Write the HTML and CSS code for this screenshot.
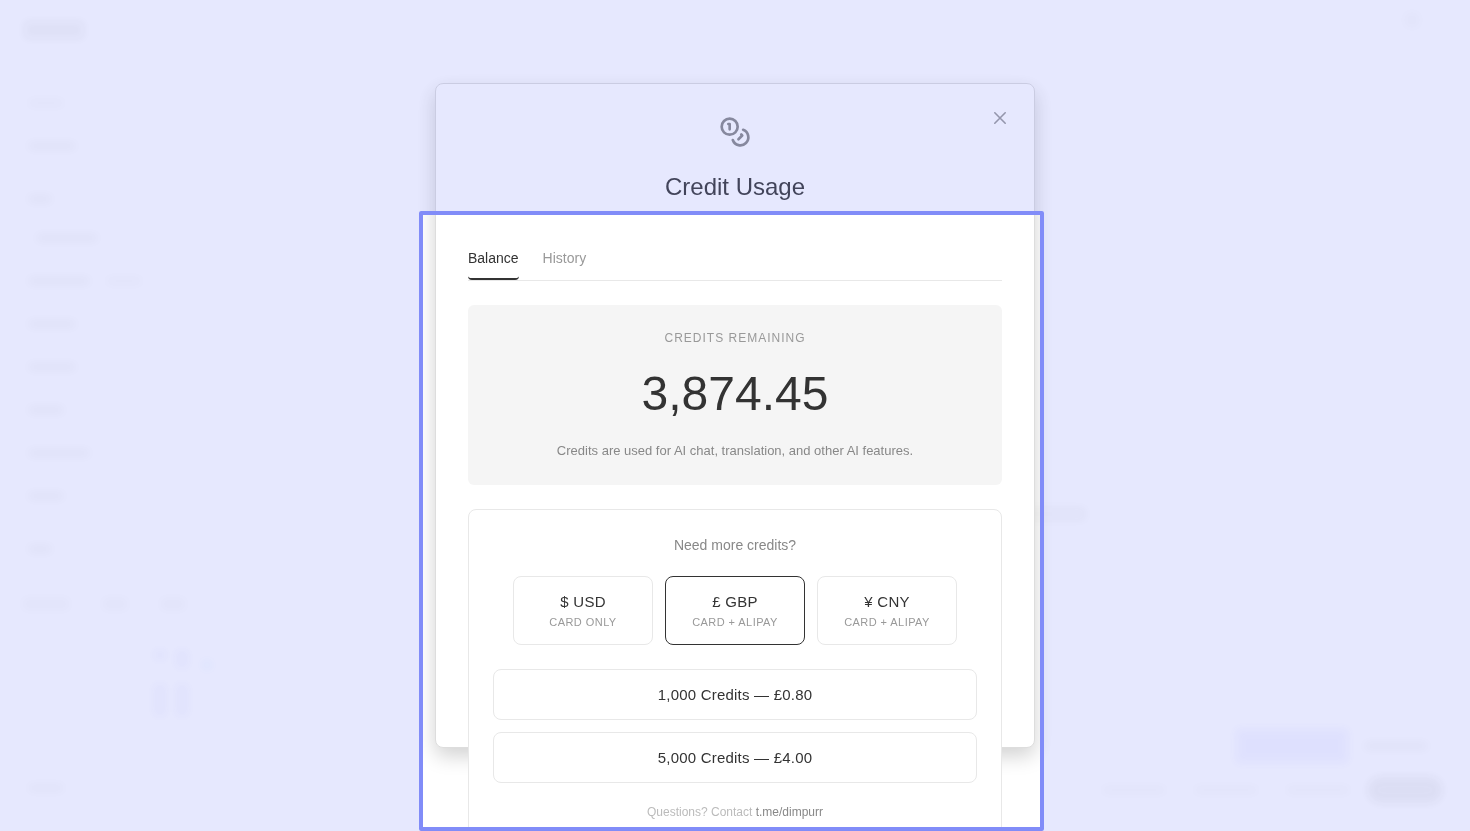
FILE: index.html
```html
<!DOCTYPE html>
<html lang="en">
<head>
<meta charset="utf-8">
<meta name="viewport" content="width=device-width, initial-scale=1">
<title>Credit Usage</title>
<link rel="stylesheet" href="styles.css">
</head>
<body>
<div class="backdrop" aria-hidden="true">
  <div class="side">
    <i class="bar brand"></i>
    <i class="bar short pale"></i>
    <i class="bar mid"></i>
    <i class="bar tiny group"></i>
    <i class="bar long nested"></i>
    <div class="pair"><i class="bar long"></i><i class="bar short pale"></i></div>
    <i class="bar mid"></i>
    <i class="bar mid"></i>
    <i class="bar short"></i>
    <i class="bar long"></i>
    <i class="bar short"></i>
    <i class="bar tiny group"></i>
    <div class="stats"><i class="bar"></i><i class="bar"></i><i class="bar"></i></div>
    <div class="marks"><i class="bar dot"></i><i class="bar"></i><i class="bar sky"></i><i class="bar tall"></i><i class="bar tall"></i></div>
    <i class="bar short foot"></i>
  </div>
  <div class="main">
    <i class="bar avatar"></i>
    <i class="bar headline"></i>
    <div class="row first"><i class="bar accent"></i><i class="bar label"></i></div>
    <div class="row"><i class="bar label pale"></i><i class="bar label pale"></i><i class="bar label pale"></i><i class="bar pill"></i></div>
  </div>
</div>

<div class="overlay">
  <section class="modal" role="dialog" aria-labelledby="title">
    <button class="close" type="button" aria-label="Close">
      <svg width="20" height="20" viewBox="0 0 20 20" fill="none" stroke="currentColor" stroke-width="1.6" stroke-linecap="round"><path d="M4.8 4.8l10.4 10.4M15.2 4.8L4.8 15.2"/></svg>
    </button>
    <header class="head">
      <svg class="coins" width="32" height="32" viewBox="0 0 24 24" fill="none" stroke="currentColor" stroke-width="2" stroke-linecap="round" stroke-linejoin="round"><circle cx="8" cy="8" r="6"/><path d="M18.09 10.37A6 6 0 1 1 10.34 18"/><path d="M7 6h1v4"/><path d="m16.71 13.88.7.71-2.82 2.82"/></svg>
      <h1 class="title" id="title">Credit Usage</h1>
    </header>
    <nav class="tabs" role="tablist">
      <button class="tab active" type="button" role="tab" aria-selected="true">Balance</button>
      <button class="tab" type="button" role="tab" aria-selected="false">History</button>
    </nav>
    <div class="balance">
      <p class="caption">CREDITS REMAINING</p>
      <p class="amount">3,874.45</p>
      <p class="note">Credits are used for AI chat, translation, and other AI features.</p>
    </div>
    <div class="purchase">
      <p class="ask">Need more credits?</p>
      <div class="currencies">
        <button class="currency" type="button"><span class="code">$ USD</span><span class="method">CARD ONLY</span></button>
        <button class="currency selected" type="button"><span class="code">£ GBP</span><span class="method">CARD + ALIPAY</span></button>
        <button class="currency" type="button"><span class="code">¥ CNY</span><span class="method">CARD + ALIPAY</span></button>
      </div>
      <div class="packs">
        <button class="pack" type="button">1,000 Credits — £0.80</button>
        <button class="pack" type="button">5,000 Credits — £4.00</button>
      </div>
      <p class="contact">Questions? Contact <a href="#">t.me/dimpurr</a></p>
    </div>
  </section>
</div>
<div class="spotlight" aria-hidden="true"></div>
</body>
</html>
```

FILE: styles.css
```css
* { box-sizing: border-box; }
body {
  margin: 0;
  height: 100vh;
  overflow: hidden;
  background: #fff;
  color: #333;
  font-family: "Liberation Sans", Arial, sans-serif;
}
p, h1 { margin: 0; }
button { font: inherit; color: inherit; background: none; border: 0; padding: 0; cursor: pointer; }

/* Faded page behind the dialog */
.backdrop { display: flex; justify-content: space-between; height: 100vh; }
.bar { display: block; flex: none; height: 10px; background: #333; opacity: .018; filter: blur(4px); border-radius: 4px; }
.side { display: flex; flex-direction: column; gap: 33px; width: 240px; padding: 21px 28px; }
.brand { width: 60px; height: 18px; margin: 0 0 26px -4px; opacity: .035; }
.tiny { width: 24px; }
.short { width: 36px; }
.mid { width: 48px; }
.long { width: 62px; }
.pale { opacity: .012; }
.group { margin-top: 10px; }
.nested { margin: -4px 0 0 8px; }
.pair { display: flex; gap: 16px; }
.stats { display: flex; gap: 32px; margin: 10px 0 0 -6px; }
.stats .bar { width: 48px; height: 14px; opacity: .012; }
.stats .bar + .bar { width: 26px; }
.marks { display: grid; grid-template-columns: 12px 12px 14px; gap: 14px 10px; margin: 6px 0 0 126px; }
.marks .bar { height: 18px; background: #55d; opacity: .03; }
.marks .dot { height: 10px; }
.marks .tall { height: 32px; }
.marks .sky { height: 10px; margin: 10px 0 0 4px; background: #0af; }
.foot { margin-top: 34px; opacity: .014; }
.main { display: flex; flex-direction: column; align-items: flex-end; width: 486px; padding: 12px 28px 28px; }
.avatar { width: 16px; height: 16px; margin-right: 22px; opacity: .01; }
.headline { align-self: flex-start; width: 74px; height: 14px; margin-top: auto; opacity: .025; }
.row { display: flex; align-items: center; gap: 28px; }
.first { margin: 208px 14px 14px 0; gap: 16px; }
.label { width: 64px; }
.accent { width: 112px; height: 34px; background: #66f; opacity: .05; }
.pill { width: 74px; height: 26px; border-radius: 13px; opacity: .055; margin-left: -10px; }

/* Dialog */
.overlay { position: fixed; inset: 0; display: flex; align-items: center; justify-content: center; }
.modal {
  position: relative;
  width: 600px;
  max-width: 92vw;
  height: 80vh;
  padding: 32px;
  background: #fff;
  border: 1px solid #ddd;
  border-radius: 8px;
  box-shadow: 0 8px 20px rgba(0, 0, 0, .18);
}
.close { position: absolute; top: 24px; right: 24px; display: flex; color: #999; }
.head { display: flex; flex-direction: column; align-items: center; gap: 24px; margin-bottom: 32px; }
.coins { color: #888; }
.title { font-size: 24px; line-height: 30px; font-weight: 400; }
.tabs { display: flex; gap: 24px; margin-bottom: 24px; border-bottom: 1px solid #e8e8e8; }
.tab { padding: 14px 0 10px; border-bottom: 2px solid transparent; border-radius: 4px; font-size: 14px; line-height: 20px; color: #999; }
.tab.active { color: #333; border-bottom-color: #333; }
.balance { display: flex; flex-direction: column; gap: 16px; padding: 24px; border-radius: 6px; background: #f5f5f5; text-align: center; }
.caption { font-size: 12px; line-height: 18px; letter-spacing: 1px; color: #999; }
.amount { font-size: 48px; line-height: 62px; }
.note { font-size: 13px; line-height: 20px; color: #888; }
.purchase { margin-top: 24px; padding: 24px; background: #fff; border: 1px solid #e8e8e8; border-radius: 8px; text-align: center; }
.ask { font-size: 14px; line-height: 22px; color: #888; }
.currencies { display: flex; justify-content: center; gap: 12px; margin: 20px 0 24px; }
.currency { display: flex; flex-direction: column; align-items: center; gap: 4px; width: 140px; padding: 16px 12px 15px; border: 1px solid #e8e8e8; border-radius: 8px; }
.currency.selected { border-color: #333; }
.code, .pack { font-size: 15px; letter-spacing: .02em; }
.code { line-height: 18px; }
.method { font-size: 11px; line-height: 14px; letter-spacing: .04em; color: #999; }
.packs { display: flex; flex-direction: column; gap: 12px; }
.pack { padding: 15px; border: 1px solid #e8e8e8; border-radius: 8px; line-height: 19px; letter-spacing: .014em; }
.contact { margin-top: 20px; font-size: 12px; line-height: 18px; color: #bbb; }
.contact a { color: #888; text-decoration: none; }

/* Highlight frame that tints everything outside it */
.spotlight {
  position: fixed;
  top: 211px;
  bottom: 0;
  left: calc(50% - 316px);
  width: 625px;
  border: 4px solid #818cf8;
  border-radius: 2px;
  box-shadow: 0 0 0 9999px rgba(129, 140, 248, .2);
  pointer-events: none;
}
```
